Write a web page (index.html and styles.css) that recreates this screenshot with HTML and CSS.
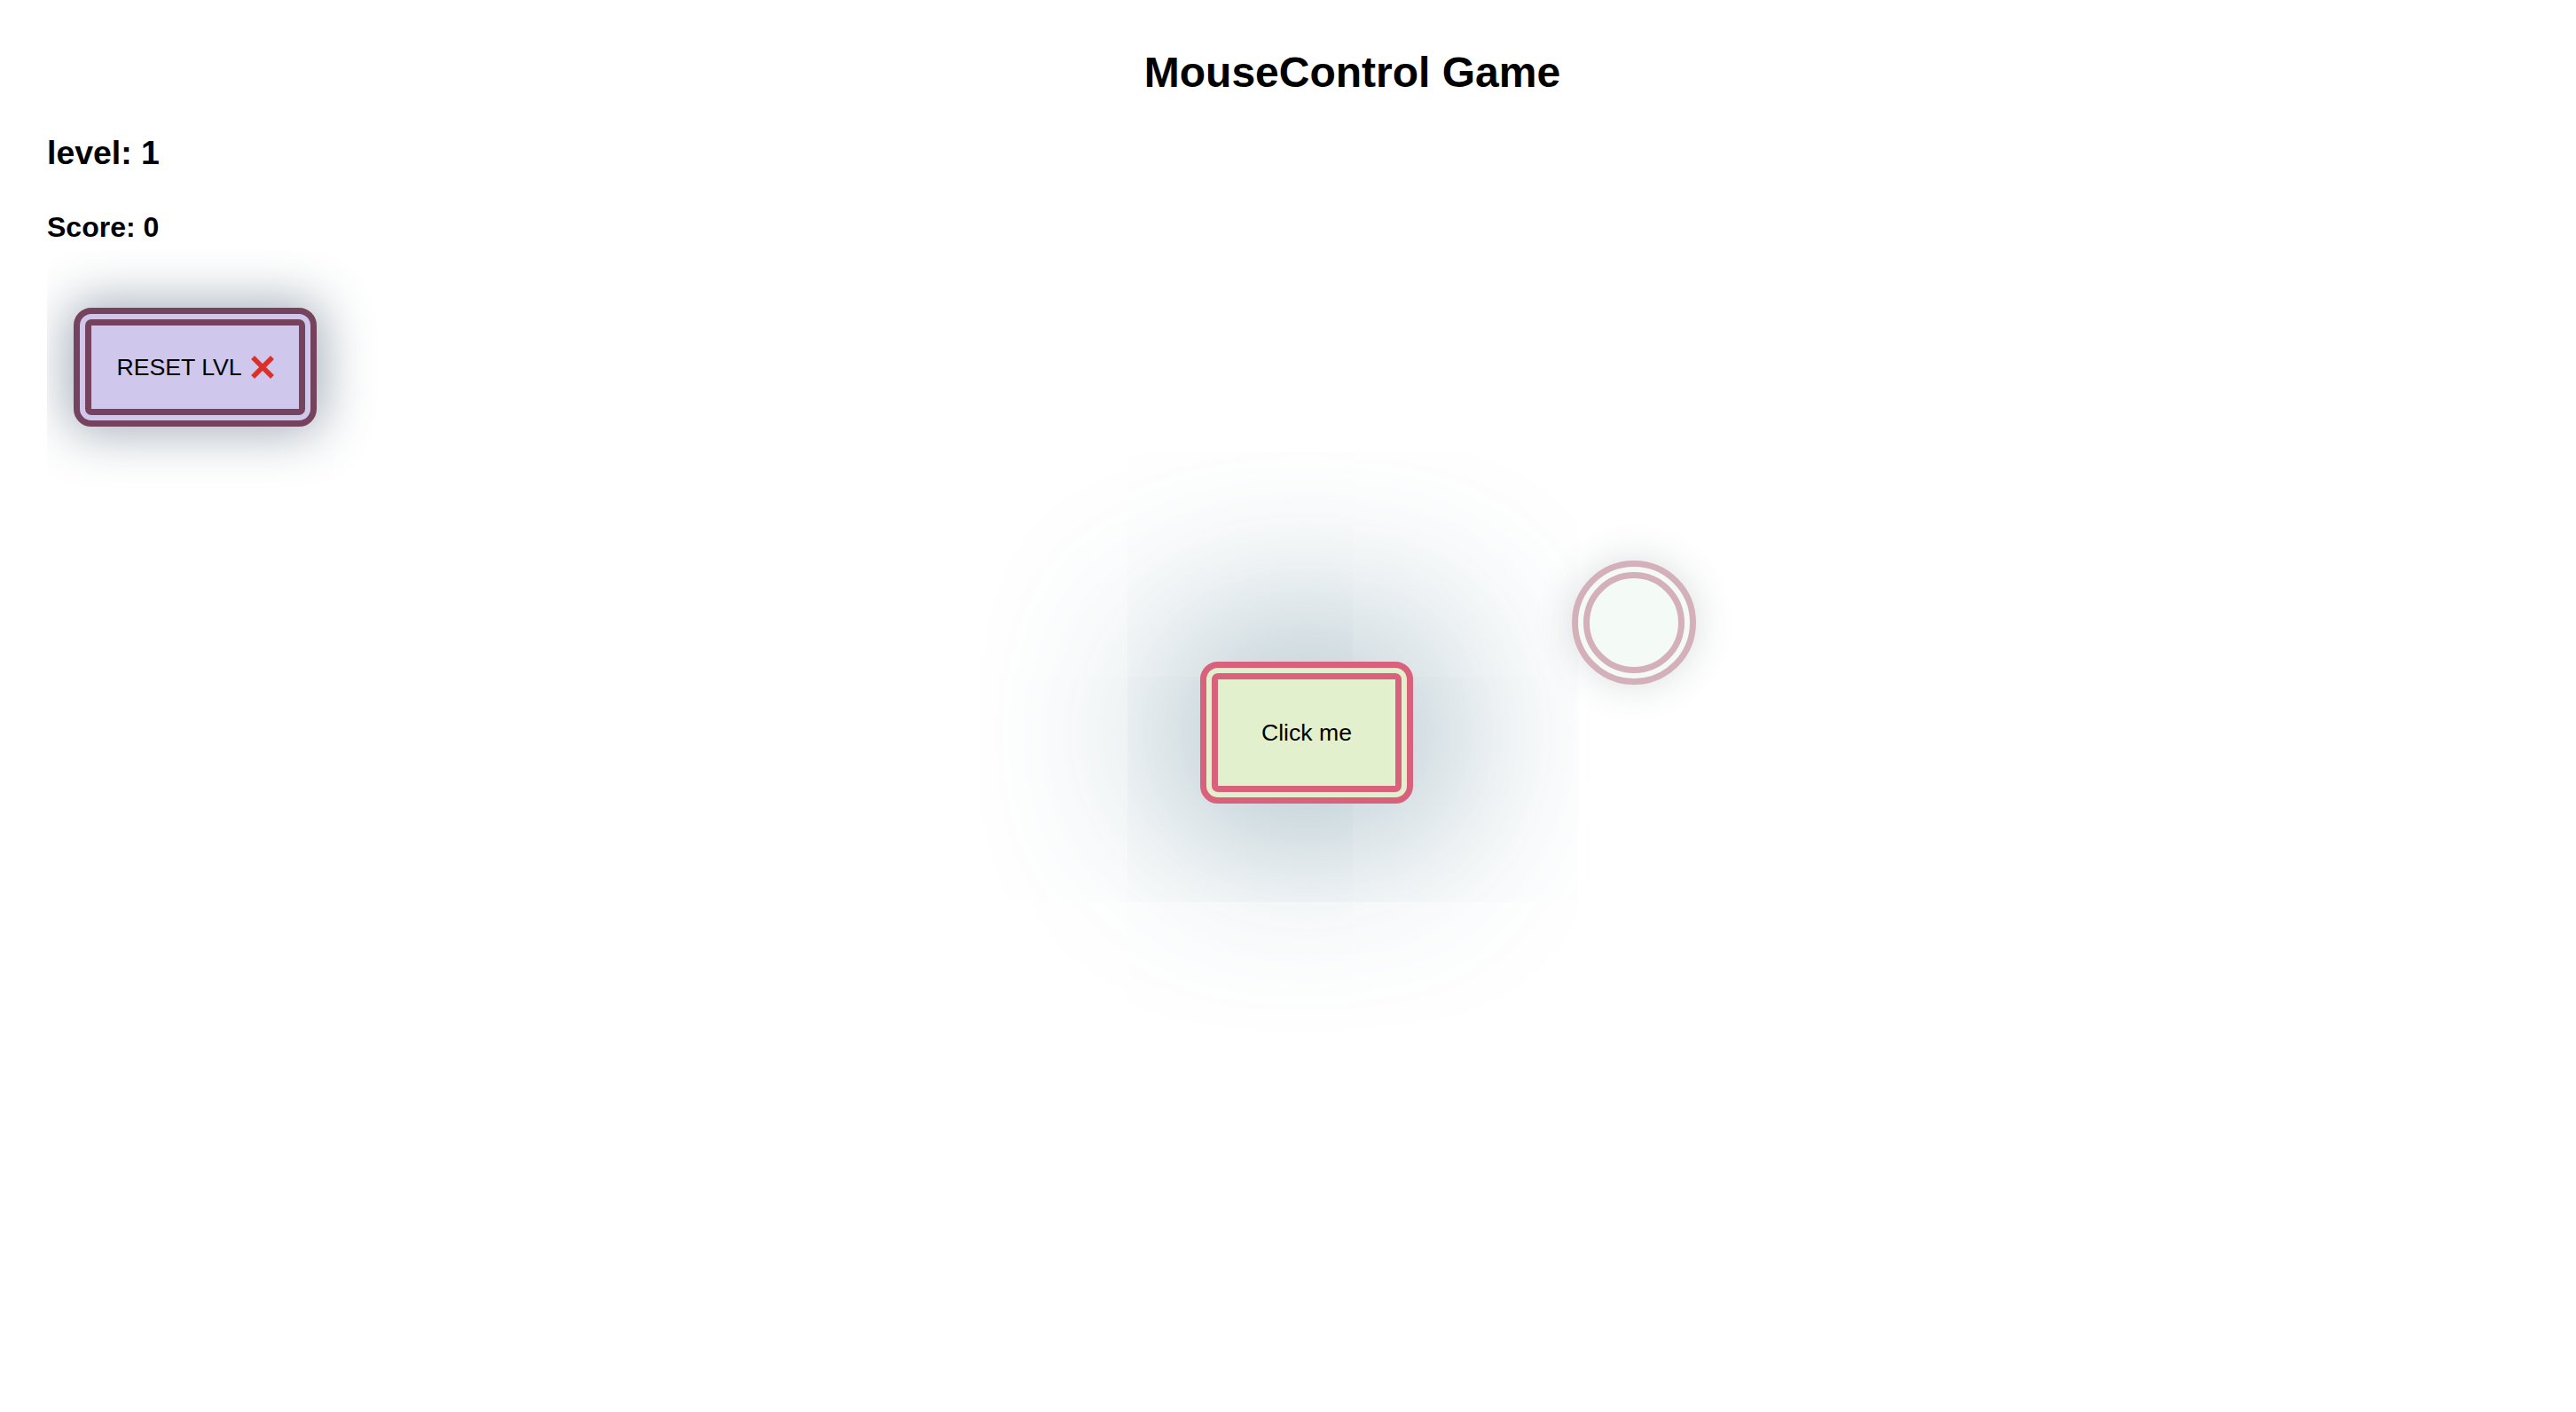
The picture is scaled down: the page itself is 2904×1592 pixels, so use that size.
FILE: index.html
```html
<!DOCTYPE html>
<html lang="en">
<head>
<meta charset="utf-8">
<title>MouseControl Game</title>
<link rel="stylesheet" href="styles.css">
</head>
<body>
  <header class="header">
    <h2 class="title">MouseControl Game</h2>
  </header>
  <main class="panel">
    <h3 class="level">level: 1</h3>
    <h4 class="score">Score: 0</h4>
    <div class="reset-wrap">
      <button class="reset-btn" type="button">
        <span>RESET LVL</span>
        <svg class="cross" viewBox="0 0 26 26" width="26" height="26" aria-hidden="true">
          <path d="M4 4 L22 22 M22 4 L4 22" stroke="#dc2f2a" stroke-width="5.5" stroke-linecap="square" fill="none"/>
        </svg>
      </button>
    </div>
  </main>
  <div class="game-canvas">
    <button class="click-btn" type="button">Click me</button>
    <div class="target"></div>
  </div>
</body>
</html>
```

FILE: styles.css
```css
html, body {
  margin: 0;
  padding: 0;
  background: #ffffff;
}

body {
  font-family: "Liberation Sans", Arial, sans-serif;
  color: #000;
  width: 2904px;
  height: 1592px;
  position: relative;
  overflow: hidden;
}

.header {
  padding: 54px 0 0 145px;
  text-align: center;
}

.title {
  margin: 0;
  font-size: 48px;
  font-weight: 700;
  line-height: normal;
}

.panel {
  padding-left: 53px;
  display: flex;
  flex-direction: column;
  align-items: flex-start;
}

.level {
  margin: 42px 0 0 0;
  font-size: 37.44px;
  font-weight: 700;
  line-height: normal;
}

.score {
  margin: 44px 0 0 0;
  font-size: 32px;
  font-weight: 700;
  line-height: normal;
}

.reset-wrap {
  margin-top: 8px;
  padding: 64px 70px 70px 30px;
  overflow: hidden;
}

.reset-btn {
  box-sizing: border-box;
  width: 274px;
  height: 134px;
  display: flex;
  align-items: center;
  justify-content: center;
  gap: 10px;
  padding: 0;
  font-family: "Liberation Sans", Arial, sans-serif;
  font-size: 26.67px;
  color: #000;
  background: #cfc8ec;
  border: 20px double #76435f;
  border-radius: 20px;
  box-shadow: 0 0 56px 8px rgba(45, 70, 95, 0.42);
}

.cross {
  display: block;
  flex: none;
}

.game-canvas {
  position: absolute;
  inset: 0;
  pointer-events: none;
}

.click-btn {
  position: absolute;
  left: 1353px;
  top: 746px;
  box-sizing: border-box;
  width: 240px;
  height: 160px;
  padding: 0;
  font-family: "Liberation Sans", Arial, sans-serif;
  font-size: 26.67px;
  color: #000;
  background: #e2f0cd;
  border: 20px double #da617b;
  border-radius: 20px;
  box-shadow: 0 0 200px 40px rgba(55, 105, 125, 0.44);
}

.target {
  position: absolute;
  left: 1772px;
  top: 632px;
  box-sizing: border-box;
  width: 140px;
  height: 140px;
  border-radius: 50%;
  background: #f4faf6;
  border: 20px double #d4b0bb;
  box-shadow: 0 0 40px 4px rgba(60, 80, 90, 0.16);
}
```
